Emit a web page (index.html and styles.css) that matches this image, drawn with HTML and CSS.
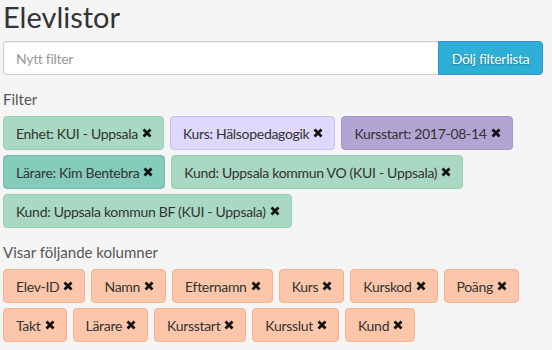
FILE: index.html
```html
<!DOCTYPE html>
<html lang="sv">
<head>
    <meta charset="UTF-8">
    <title>Elevlistor</title>
    <link rel="stylesheet" href="styles.css">
</head>
<body>
    <div class="page">
        <h1>Elevlistor</h1>
        <div class="search">
            <input type="text" class="search-input" placeholder="Nytt filter">
            <button class="toggle-button">Dölj filterlista</button>
        </div>

        <h4 class="section-title">Filter</h4>
        <div class="tags">
            <span class="tag tag-unit">Enhet: KUI - Uppsala<svg class="x" viewBox="0 0 10 10"><path d="M1.5 1.5L8.5 8.5M8.5 1.5L1.5 8.5"/></svg></span>
            <span class="tag tag-course">Kurs: Hälsopedagogik<svg class="x" viewBox="0 0 10 10"><path d="M1.5 1.5L8.5 8.5M8.5 1.5L1.5 8.5"/></svg></span>
            <span class="tag tag-start">Kursstart: 2017-08-14<svg class="x" viewBox="0 0 10 10"><path d="M1.5 1.5L8.5 8.5M8.5 1.5L1.5 8.5"/></svg></span>
            <span class="tag tag-teacher">Lärare: Kim Bentebra<svg class="x" viewBox="0 0 10 10"><path d="M1.5 1.5L8.5 8.5M8.5 1.5L1.5 8.5"/></svg></span>
            <span class="tag tag-unit">Kund: Uppsala kommun VO (KUI - Uppsala)<svg class="x" viewBox="0 0 10 10"><path d="M1.5 1.5L8.5 8.5M8.5 1.5L1.5 8.5"/></svg></span>
            <span class="tag tag-unit">Kund: Uppsala kommun BF (KUI - Uppsala)<svg class="x" viewBox="0 0 10 10"><path d="M1.5 1.5L8.5 8.5M8.5 1.5L1.5 8.5"/></svg></span>
        </div>

        <h4 class="section-title">Visar följande kolumner</h4>
        <div class="tags">
            <span class="tag tag-col">Elev-ID<svg class="x" viewBox="0 0 10 10"><path d="M1.5 1.5L8.5 8.5M8.5 1.5L1.5 8.5"/></svg></span>
            <span class="tag tag-col">Namn<svg class="x" viewBox="0 0 10 10"><path d="M1.5 1.5L8.5 8.5M8.5 1.5L1.5 8.5"/></svg></span>
            <span class="tag tag-col">Efternamn<svg class="x" viewBox="0 0 10 10"><path d="M1.5 1.5L8.5 8.5M8.5 1.5L1.5 8.5"/></svg></span>
            <span class="tag tag-col">Kurs<svg class="x" viewBox="0 0 10 10"><path d="M1.5 1.5L8.5 8.5M8.5 1.5L1.5 8.5"/></svg></span>
            <span class="tag tag-col">Kurskod<svg class="x" viewBox="0 0 10 10"><path d="M1.5 1.5L8.5 8.5M8.5 1.5L1.5 8.5"/></svg></span>
            <span class="tag tag-col">Poäng<svg class="x" viewBox="0 0 10 10"><path d="M1.5 1.5L8.5 8.5M8.5 1.5L1.5 8.5"/></svg></span>
            <span class="tag tag-col">Takt<svg class="x" viewBox="0 0 10 10"><path d="M1.5 1.5L8.5 8.5M8.5 1.5L1.5 8.5"/></svg></span>
            <span class="tag tag-col">Lärare<svg class="x" viewBox="0 0 10 10"><path d="M1.5 1.5L8.5 8.5M8.5 1.5L1.5 8.5"/></svg></span>
            <span class="tag tag-col">Kursstart<svg class="x" viewBox="0 0 10 10"><path d="M1.5 1.5L8.5 8.5M8.5 1.5L1.5 8.5"/></svg></span>
            <span class="tag tag-col">Kursslut<svg class="x" viewBox="0 0 10 10"><path d="M1.5 1.5L8.5 8.5M8.5 1.5L1.5 8.5"/></svg></span>
            <span class="tag tag-col">Kund<svg class="x" viewBox="0 0 10 10"><path d="M1.5 1.5L8.5 8.5M8.5 1.5L1.5 8.5"/></svg></span>
        </div>
    </div>
</body>
</html>
```

FILE: styles.css
```css
body {
    margin: 0;
    padding: 0;
    background-color: #f5f5f5;
    color: #333;
    font-family: Lato, "Noto Sans", sans-serif;
}
.page {
    padding: 0 9px 0 3px;
}
h1 {
    margin: 0;
    font-size: 29px;
    font-weight: normal;
    line-height: 33px;
    color: #333;
}
.search {
    display: flex;
    margin-top: 8px;
    height: 34px;
}
.search-input {
    flex: 1;
    box-sizing: border-box;
    height: 34px;
    margin: 0;
    padding: 0 12px;
    border: 1px solid #ccc;
    border-right: none;
    border-radius: 4px 0 0 4px;
    background: #fff;
    font-family: inherit;
    font-size: 14px;
    letter-spacing: -0.3px;
    color: #555;
    box-shadow: inset 0 1px 1px rgba(0, 0, 0, 0.06);
}
.search-input::placeholder {
    color: #999;
}
.toggle-button {
    box-sizing: border-box;
    width: 105px;
    height: 34px;
    padding: 0;
    border: 1px solid #3b8ee0;
    border-radius: 0 4px 4px 0;
    background-color: #2eafd5;
    color: #fff;
    font-family: inherit;
    font-size: 14px;
    letter-spacing: -0.3px;
    text-shadow: 0 1px 2px rgba(0, 0, 0, 0.35);
    cursor: pointer;
}
.section-title {
    margin: 0;
    padding: 14px 0 7px;
    font-size: 15px;
    font-weight: normal;
    line-height: 20px;
    color: #555;
}
.tags {
    display: flex;
    flex-wrap: wrap;
    gap: 5px 6px;
}
.tag {
    display: inline-flex;
    align-items: center;
    gap: 4px;
    box-sizing: border-box;
    height: 34px;
    padding: 0 11px 0 12px;
    border: 1px solid;
    border-radius: 4px;
    font-size: 14px;
    letter-spacing: -0.3px;
    color: #333;
    white-space: nowrap;
}
.x {
    width: 10px;
    height: 10px;
    fill: none;
    stroke: #111;
    stroke-width: 2.8;
}
.tag-unit {
    background-color: #a9d8c3;
    border-color: #98cfb6;
}
.tag-course {
    background-color: #ddd8fc;
    border-color: #c9bff6;
}
.tag-start {
    background-color: #b3a5d3;
    border-color: #a394c8;
}
.tag-teacher {
    background-color: #84cbb9;
    border-color: #70c0ac;
}
.tag-col {
    background-color: #fcc6aa;
    border-color: #f7b292;
}
```
